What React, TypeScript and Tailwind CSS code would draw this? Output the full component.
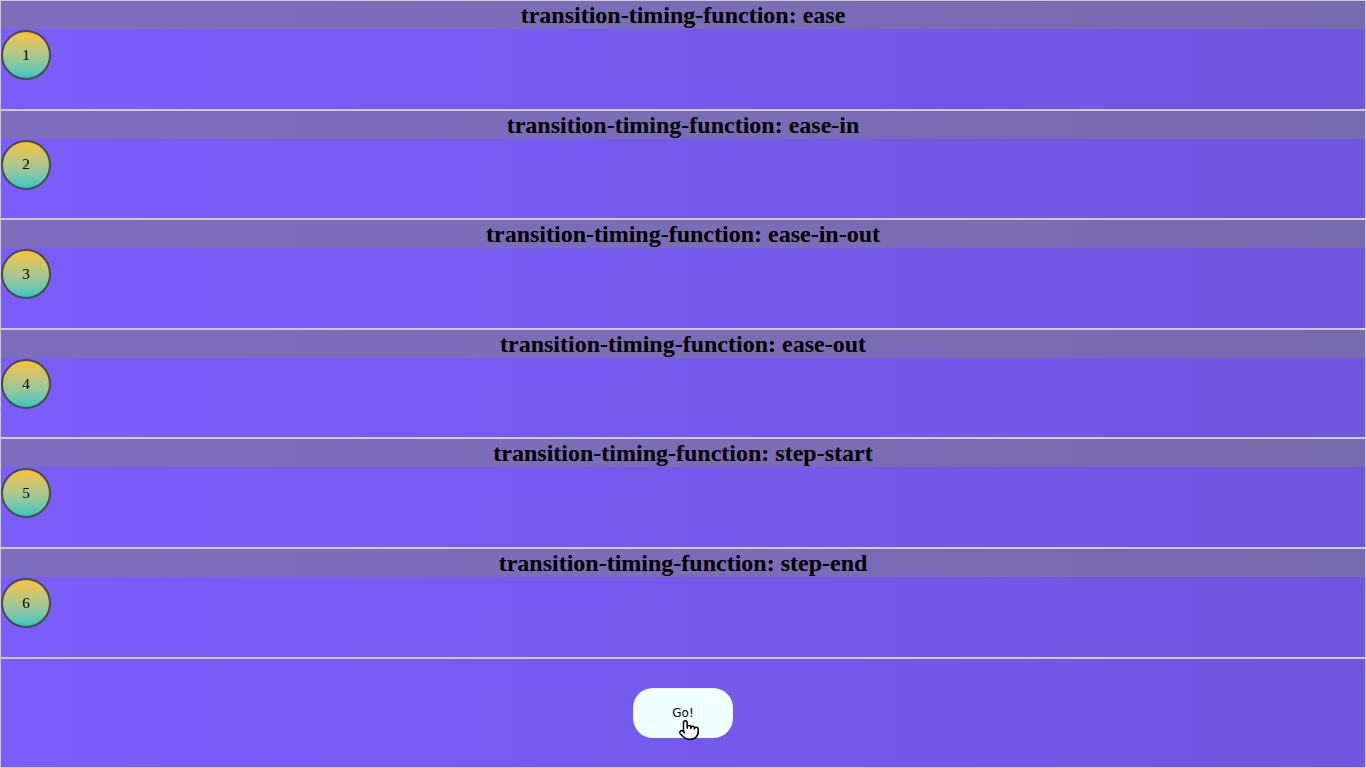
import { Pointer } from "lucide-react";

const rows = ["ease", "ease-in", "ease-in-out", "ease-out", "step-start", "step-end"];

export default function App() {
  return (
    <div className="h-screen w-full flex flex-col border border-[#cccccc] bg-gradient-to-r from-[#7b5dfb] to-[#6f56df] font-['Liberation_Serif',serif] text-black">
      {rows.map((name, i) => (
        <div key={name} className="h-[109.6px] shrink-0 border-b-2 border-[#cccccc] flex flex-col">
          <h2 className="h-[28px] bg-[rgba(128,128,128,0.5)] text-center text-[24px] font-bold leading-[28px]">
            transition-timing-function: {name}
          </h2>
          <div className="mt-[1px] w-[50px] h-[50px] rounded-full border-2 border-[#4a4a4a] bg-gradient-to-b from-[#f8c12c] to-[#26c6c4] flex items-center justify-center text-[15px]">
            {i + 1}
          </div>
        </div>
      ))}
      <div className="flex-1 flex items-center justify-center">
        <div className="relative">
          <button className="w-[100px] h-[50px] rounded-[20px] bg-[#f0ffff] text-[12px] font-['DejaVu_Sans',sans-serif] text-black">
            Go!
          </button>
          <Pointer
            className="absolute left-[45px] top-[31px]"
            size={22}
            fill="white"
            stroke="black"
            strokeWidth={1.6}
          />
        </div>
      </div>
    </div>
  );
}
